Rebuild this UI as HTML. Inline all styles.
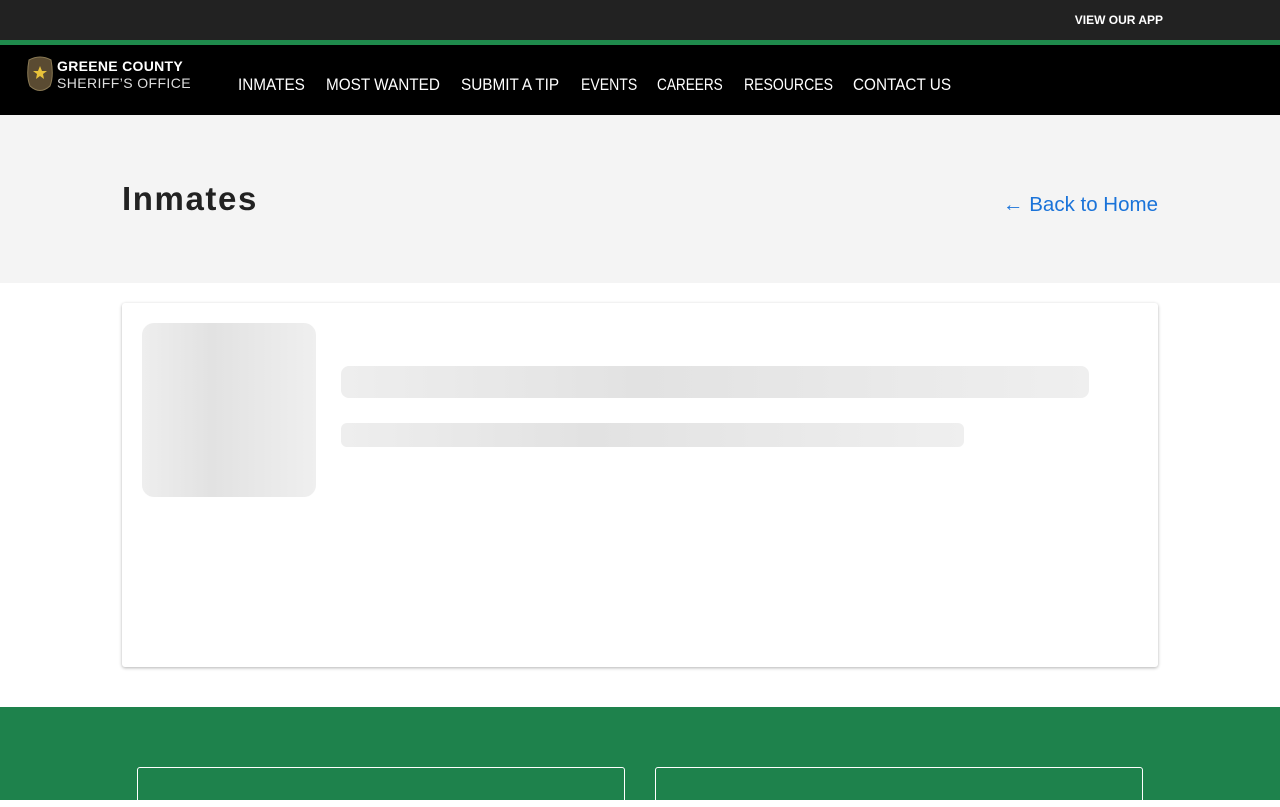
<!DOCTYPE html>
<html><head><meta charset="utf-8"><style>
*{box-sizing:border-box;margin:0;padding:0}
body{width:1280px;height:800px;overflow:hidden;font-family:"Liberation Sans",sans-serif;background:#fff;position:relative}
.top{position:absolute;top:0;left:0;width:1280px;height:40px;background:#222}
.top span{position:absolute;right:117px;top:13px;color:#fff;font-weight:bold;font-size:12px}
.gl{position:absolute;top:40px;left:0;width:1280px;height:5px;background:#1f8a4c}
.nav{position:absolute;top:45px;left:0;width:1280px;height:70px;background:#000;color:#fff}
.logo{position:absolute;left:26px;top:11px}
.lt{position:absolute;left:57px;top:13px;line-height:17px}
.lt b{font-size:14px;letter-spacing:.3px;display:block}
.lt i{font-style:normal;font-size:14px;letter-spacing:.4px;color:#ddd;display:block}
.menu span{position:absolute;top:30px;font-size:17px;white-space:nowrap;transform:scaleX(.9);transform-origin:left}
.hero{position:absolute;top:115px;left:0;width:1280px;height:168px;background:#f4f4f4}
.hero h1{position:absolute;left:122px;top:65px;font-size:33px;letter-spacing:1.6px;color:#222}
.hero a{position:absolute;right:122px;top:78px;font-size:20.5px;color:#1a73d9;text-decoration:none}
.card{position:absolute;left:122px;top:303px;width:1036px;height:364px;background:#fff;border-radius:3px;box-shadow:0 1px 3px rgba(0,0,0,.3)}
.sk{position:absolute;background:linear-gradient(90deg,#eee,#e2e2e2 40%,#efefef)}
.foot{position:absolute;top:707px;left:0;width:1280px;height:93px;background:#1e824c}
.box{position:absolute;top:60px;width:488px;height:40px;border:1px solid #fff;border-radius:3px}
</style></head><body>
<div class="top"><span>VIEW OUR APP</span></div>
<div class="gl"></div>
<div class="nav">
<svg class="logo" width="28" height="38" viewBox="0 0 28 38"><path d="M3 4 Q14 -2 25 4 Q28 20 24 30 Q14 39 4 30 Q0 20 3 4Z" fill="#5a4b32" stroke="#8a7a55"/><polygon points="14,10 16,15 21,15 17,18 18,23 14,20 10,23 11,18 7,15 12,15" fill="#e8c23a"/></svg>
<div class="lt"><b>GREENE COUNTY</b><i>SHERIFF’S OFFICE</i></div>
<div class="menu"><span style="left:238px">INMATES</span><span style="left:326px">MOST WANTED</span><span style="left:461px">SUBMIT A TIP</span><span style="left:581px;transform:scaleX(.826)">EVENTS</span><span style="left:657px;transform:scaleX(.80)">CAREERS</span><span style="left:744px;transform:scaleX(.826)">RESOURCES</span><span style="left:853px">CONTACT US</span></div>
</div>
<div class="hero"><h1>Inmates</h1><a>← Back to Home</a></div>
<div class="card">
<div class="sk" style="left:20px;top:20px;width:174px;height:174px;border-radius:12px"></div>
<div class="sk" style="left:219px;top:63px;width:748px;height:32px;border-radius:8px"></div>
<div class="sk" style="left:219px;top:120px;width:623px;height:24px;border-radius:6px"></div>
</div>
<div class="foot"><div class="box" style="left:137px"></div><div class="box" style="left:655px"></div></div>
</body></html>
